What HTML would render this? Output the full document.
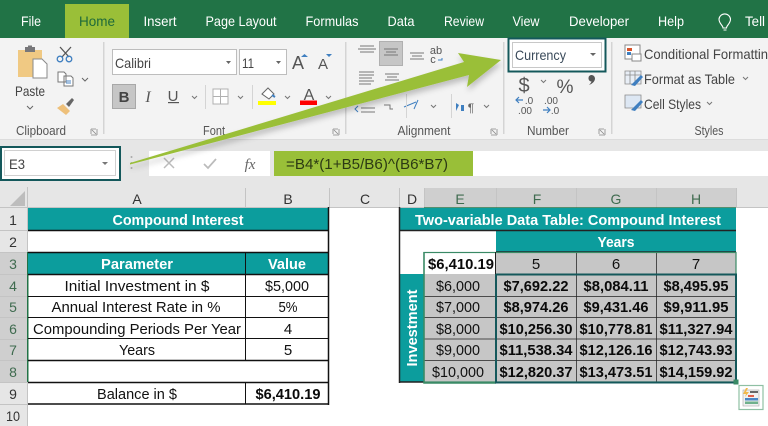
<!DOCTYPE html>
<html><head><meta charset="utf-8"><title>Excel</title>
<style>
html,body{margin:0;padding:0;width:768px;height:426px;overflow:hidden;background:#fff}
svg{display:block;filter:blur(.3px)}
text{font-family:"Liberation Sans",sans-serif}
.t{font-size:14px;fill:#fff;text-anchor:middle}
.c{font-size:15px;fill:#111;text-anchor:middle}
.b{font-size:15px;fill:#0a0a0a;text-anchor:middle;font-weight:bold}
.w{font-size:15px;fill:#fff;text-anchor:middle;font-weight:bold}
.h{font-size:14px;fill:#333;text-anchor:middle}
.g{font-size:14px;fill:#3f6b4f;text-anchor:middle}
</style></head><body>
<svg width="768" height="426" viewBox="0 0 768 426" xmlns="http://www.w3.org/2000/svg">
<defs><filter id="s" x="-5%" y="-20%" width="110%" height="150%"><feDropShadow dx="1" dy="4" stdDeviation="3" flood-color="#000" flood-opacity=".22"/></filter></defs>

<!-- title bar -->
<rect width="768" height="38" fill="#217346"/>
<rect x="65" y="4" width="64" height="34" fill="#9abf38"/>
<text class="t" x="31" y="26" textLength="20" lengthAdjust="spacingAndGlyphs">File</text>
<text x="97" y="26" font-size="14" fill="#1f6a3a" text-anchor="middle" textLength="36" lengthAdjust="spacingAndGlyphs">Home</text>
<text class="t" x="160" y="26" textLength="33" lengthAdjust="spacingAndGlyphs">Insert</text>
<text class="t" x="241" y="26" textLength="71" lengthAdjust="spacingAndGlyphs">Page Layout</text>
<text class="t" x="332" y="26" textLength="53" lengthAdjust="spacingAndGlyphs">Formulas</text>
<text class="t" x="401" y="26" textLength="27" lengthAdjust="spacingAndGlyphs">Data</text>
<text class="t" x="464" y="26" textLength="40" lengthAdjust="spacingAndGlyphs">Review</text>
<text class="t" x="526" y="26" textLength="27" lengthAdjust="spacingAndGlyphs">View</text>
<text class="t" x="599" y="26" textLength="60" lengthAdjust="spacingAndGlyphs">Developer</text>
<text class="t" x="671" y="26" textLength="26" lengthAdjust="spacingAndGlyphs">Help</text>
<text x="745" y="26" font-size="14" fill="#fff" textLength="20" lengthAdjust="spacingAndGlyphs">Tell</text>
<path d="M723 28c0-3-4-4-4-9a5.800 5.800 0 0 1 11.500 0c0 5-4 6-4 9zM723.500 30h3" fill="none" stroke="#fff" stroke-width="1.100"/>

<!-- ribbon -->
<rect y="38" width="768" height="101" fill="#f3f3f3"/>
<rect y="139" width="768" height="48" fill="#e6e6e6"/>
<rect y="139" width="768" height="1" fill="#dcdcdc"/>
<g fill="#d4d4d4">
<rect x="103" y="42" width="1.500" height="92"/><rect x="345" y="42" width="1.500" height="92"/><rect x="503" y="42" width="1.500" height="92"/><rect x="611" y="42" width="1.500" height="92"/>
</g>

<!-- clipboard -->
<path d="M18 50h24v11h-9v16H18z" fill="#f0c983"/>
<rect x="25" y="47" width="10" height="5" fill="#77777a"/><rect x="28" y="45.500" width="4" height="3" fill="#77777a"/>
<path d="M33 59h9l5 5v14H33z" fill="#fff" stroke="#8a8a8a"/>
<text x="30" y="96" font-size="14" fill="#444" text-anchor="middle" textLength="30" lengthAdjust="spacingAndGlyphs">Paste</text>
<path d="M27 106l3 3 3-3M82 78l3 3 3-3" fill="none" stroke="#666"/>
<path d="M60 47l9 10M71 47l-9 10" stroke="#555" stroke-width="1.300" fill="none"/>
<circle cx="60" cy="59" r="2.800" fill="none" stroke="#3f7fc0" stroke-width="1.300"/><circle cx="69" cy="59" r="2.800" fill="none" stroke="#3f7fc0" stroke-width="1.300"/>
<path d="M58 72h6l2 2v8h-8zM64 76h7l2 2v8h-9z" fill="#fff" stroke="#777"/>
<path d="M66 81h5M66 83h5" stroke="#4a86c5"/>
<path d="M57 108l6-4 7 7-4 4z" fill="#eec07a"/><path d="M66 104l6-6 2 2-5 7z" fill="#666"/>
<text x="41" y="135" font-size="13" fill="#555" text-anchor="middle" textLength="50" lengthAdjust="spacingAndGlyphs">Clipboard</text>
<path d="M91 129h5M91 129v5M97 135h-6M97 135v-6M92 130l4 4" fill="none" stroke="#888" stroke-width=".8"/>

<!-- font -->
<rect x="112.500" y="49.500" width="124" height="25" fill="#fff" stroke="#bdbdbd"/>
<rect x="239.500" y="49.500" width="47" height="25" fill="#fff" stroke="#bdbdbd"/>
<text x="115" y="68" font-size="14" fill="#444" textLength="36" lengthAdjust="spacingAndGlyphs">Calibri</text>
<text x="242" y="68" font-size="14" fill="#444" textLength="12" lengthAdjust="spacingAndGlyphs">11</text>
<path d="M226 61h5l-2.500 3zM276 61h5l-2.500 3z" fill="#666"/>
<text x="298" y="69" font-size="18" fill="#555" text-anchor="middle">A</text>
<text x="323" y="69" font-size="15" fill="#555" text-anchor="middle">A</text>
<path d="M301 57h7l-3.500-3z" fill="#3f7fc0"/><path d="M326 54h6l-3 3z" fill="#3f7fc0"/>
<rect x="112.500" y="84.500" width="23" height="24" fill="#c6c6c6" stroke="#a8a8a8"/>
<text x="124" y="102" font-size="15" font-weight="bold" fill="#444" text-anchor="middle">B</text>
<text x="148" y="102" font-size="16" font-style="italic" fill="#555" text-anchor="middle" style="font-family:'Liberation Serif',serif">I</text>
<text x="173" y="101" font-size="15" fill="#555" text-anchor="middle">U</text>
<rect x="168" y="102" width="11" height="1.200" fill="#555"/>
<path d="M192 96l2.500 2.500 2.500-2.500M238 96l2.500 2.500 2.500-2.500M285 96l2.500 2.500 2.500-2.500M326 96l2.500 2.500 2.500-2.500" fill="none" stroke="#777"/>
<rect x="205" y="85" width="1" height="24" fill="#d4d4d4"/><rect x="252" y="85" width="1" height="24" fill="#d4d4d4"/>
<path d="M213 89h15v15h-15zM220.500 89v15M213 96.500h15" fill="#fff" stroke="#b0b0b0"/>
<path d="M262 94l6-6 6 6-5 5z" fill="#fff" stroke="#666"/><path d="M272 95l3 2" stroke="#3f7fc0" stroke-width="2"/>
<rect x="258" y="101" width="18" height="4" fill="#ffff00"/>
<text x="309" y="100" font-size="16" fill="#555" text-anchor="middle">A</text>
<rect x="300" y="100.500" width="17" height="4.500" fill="#f00"/>
<text x="214" y="135" font-size="13" fill="#555" text-anchor="middle" textLength="22" lengthAdjust="spacingAndGlyphs">Font</text>
<path d="M333 129h5M333 129v5M339 135h-6M339 135v-6M334 130l4 4" fill="none" stroke="#888" stroke-width=".8"/>

<!-- alignment -->
<path d="M360 46h14M358 49h18M360 52h14M359 72h15M359 75h15M359 78h13M359 81h15M359 84h12" stroke="#777" fill="none"/>
<rect x="379.500" y="41.500" width="23" height="24" fill="#c6c6c6" stroke="#b0b0b0"/>
<path d="M384 49h14M386 52h10M384 55h14" stroke="#777"/>
<path d="M410 53h14M412 56h10M410 59h14M385 74h14M387 77h10M385 80h14" stroke="#777" fill="none"/>
<text x="436" y="54" font-size="11" fill="#555" text-anchor="middle">ab</text><text x="433" y="63" font-size="11" fill="#555" text-anchor="middle">c</text>
<path d="M442 58v2h-4" stroke="#3f7fc0" fill="none"/>
<path d="M361 108h14M361 112h14" stroke="#777"/>
<path d="M358 106l-3 3 3 3" stroke="#3f7fc0" fill="none"/>
<path d="M384 105h6v4h3" stroke="#777" fill="none"/>
<path d="M404 107l12-5M418 100l-4 9" stroke="#3f7fc0" fill="none"/>
<text x="424" y="135" font-size="13" fill="#555" text-anchor="middle" textLength="53" lengthAdjust="spacingAndGlyphs">Alignment</text>
<path d="M491 129h5M491 129v5M497 135h-6M497 135v-6M492 130l4 4" fill="none" stroke="#888" stroke-width=".8"/>
<path d="M461 105h3v6h-3zM459 105l-3-2v8z" fill="#3f7fc0"/>
<text x="471" y="112" font-size="12" fill="#666" text-anchor="middle">¶</text>
<path d="M431 105l2.500 2.500 2.500-2.500M484 105l2.500 2.500 2.500-2.500" fill="none" stroke="#777"/>
<rect x="451" y="94" width="1" height="24" fill="#d4d4d4"/><rect x="406" y="94" width="1" height="24" fill="#d4d4d4"/>

<!-- number -->
<rect x="508.500" y="38.500" width="97" height="33" fill="#fff" stroke="#14585b" stroke-width="2"/>
<rect x="512.500" y="42.500" width="89" height="25" fill="#fff" stroke="#c8c8c8"/>
<text x="515" y="60" font-size="14" fill="#3a4a5a" textLength="51" lengthAdjust="spacingAndGlyphs">Currency</text>
<path d="M590 53h6l-3 3z" fill="#666"/>
<text x="524" y="92" font-size="20" fill="#555" text-anchor="middle">$</text>
<path d="M541 80l2.500 2.500 2.500-2.500" fill="none" stroke="#777"/>
<text x="565" y="93" font-size="19" fill="#555" text-anchor="middle" textLength="17" lengthAdjust="spacingAndGlyphs">%</text>
<path d="M591 75a3.500 3.500 0 0 1 4 3.500c0 3-3 5.500-6 6.500 1.500-1.500 2.500-3 2.500-3.500a3.300 3.300 0 0 1-.5-6.500z" fill="#555"/>
<text x="529" y="104" font-size="10" fill="#555" text-anchor="middle">.0</text>
<text x="525" y="114" font-size="10" fill="#555" text-anchor="middle">.00</text>
<text x="551" y="104" font-size="10" fill="#555" text-anchor="middle">.00</text>
<text x="555" y="114" font-size="10" fill="#555" text-anchor="middle">.0</text>
<path d="M523 100h-7M519 97l-3 3 3 3M543 110h7M547 107l3 3-3 3" fill="none" stroke="#3f7fc0" stroke-width="1.200"/>
<text x="548" y="135" font-size="13" fill="#555" text-anchor="middle" textLength="42" lengthAdjust="spacingAndGlyphs">Number</text>
<path d="M599 129h5M599 129v5M605 135h-6M605 135v-6M600 130l4 4" fill="none" stroke="#888" stroke-width=".8"/>

<!-- styles -->
<rect x="625" y="45" width="15" height="14" fill="#fff" stroke="#888"/>
<rect x="627" y="48" width="5" height="3" fill="#d9542b"/><rect x="627" y="52" width="4" height="3" fill="#3f7fc0"/>
<rect x="632" y="54" width="9" height="7" fill="#fff" stroke="#888"/>
<text x="644" y="59" font-size="14" fill="#444" textLength="124" lengthAdjust="spacingAndGlyphs">Conditional Formattin</text>
<path d="M625 71h16v13h-16zM625 75h16M630 71v13M635 71v13" fill="#e8eef6" stroke="#8a8a8a" stroke-width=".8"/>
<path d="M631 85l10-10 2 2-8 9z" fill="#3f7fc0"/>
<text x="644" y="84" font-size="14" fill="#444" textLength="91" lengthAdjust="spacingAndGlyphs">Format as Table</text>
<path d="M743 77l2.500 2.500 2.500-2.500M707 102l2.500 2.500 2.500-2.500" fill="none" stroke="#777"/>
<path d="M625 95h16v13h-16z" fill="#dde7f3" stroke="#8a8a8a" stroke-width=".8"/>
<path d="M631 110l10-10 2 2-8 9z" fill="#3f7fc0"/>
<text x="644" y="109" font-size="14" fill="#444" textLength="57" lengthAdjust="spacingAndGlyphs">Cell Styles</text>
<text x="709" y="135" font-size="13" fill="#555" text-anchor="middle" textLength="29" lengthAdjust="spacingAndGlyphs">Styles</text>

<!-- name box -->
<rect x="1" y="147" width="119" height="33" fill="#fff" stroke="#14585b" stroke-width="2"/>
<rect x="4.500" y="150.500" width="111" height="25" fill="#fff" stroke="#d0d0d0"/>
<text x="9" y="169" font-size="14" fill="#444" textLength="16" lengthAdjust="spacingAndGlyphs">E3</text>
<path d="M102 162h6l-3 3z" fill="#777"/>
<circle cx="131.500" cy="157" r="1" fill="#aaa"/><circle cx="131.500" cy="163" r="1" fill="#aaa"/><circle cx="131.500" cy="168" r="1" fill="#aaa"/>

<!-- formula bar -->
<rect x="149" y="151" width="121" height="25" fill="#fff"/>
<rect x="274" y="151" width="494" height="25" fill="#fff"/>
<rect x="274" y="151" width="199" height="25" fill="#99bf38"/>
<path d="M164 158l10 10M174 158l-10 10" stroke="#bbb" stroke-width="1.500"/>
<path d="M204 164l4 4 8-9" stroke="#bbb" stroke-width="1.700" fill="none"/>
<text x="250" y="169" font-size="15" font-style="italic" fill="#666" text-anchor="middle" style="font-family:'Liberation Serif',serif">fx</text>
<text x="286" y="169" font-size="14.500" fill="#2c3a14" textLength="162" lengthAdjust="spacingAndGlyphs">=B4*(1+B5/B6)^(B6*B7)</text>

<!-- column headers -->
<rect y="187" width="768" height="21" fill="#e6e6e6"/>
<rect x="0" y="208" width="28" height="218" fill="#e6e6e6"/>
<rect y="207" width="768" height="1" fill="#c4c4c4"/>
<rect x="27" y="187" width="1" height="239" fill="#c4c4c4"/>
<path d="M25 191v15H10z" fill="#bdbdbd"/>
<rect x="424" y="188" width="312" height="20" fill="#cfcfcf"/>
<rect x="0" y="252" width="28" height="130" fill="#cfcfcf"/>
<g fill="#c4c4c4"><rect x="245" y="188" width="1" height="20"/><rect x="329" y="188" width="1" height="20"/><rect x="399" y="188" width="1" height="20"/><rect x="424" y="188" width="1" height="20"/><rect x="496" y="188" width="1" height="20"/><rect x="576" y="188" width="1" height="20"/><rect x="656" y="188" width="1" height="20"/><rect x="736" y="188" width="1" height="20"/></g>
<g fill="#c4c4c4"><rect y="230" width="28" height="1"/><rect y="252" width="28" height="1"/><rect y="274" width="28" height="1"/><rect y="296" width="28" height="1"/><rect y="317" width="28" height="1"/><rect y="339" width="28" height="1"/><rect y="360" width="28" height="1"/><rect y="382" width="28" height="1"/><rect y="404" width="28" height="1"/></g>
<rect x="27" y="252" width="1.500" height="130" fill="#217346"/>
<rect x="424" y="207" width="312" height="1.500" fill="#217346" opacity=".7"/>
<text class="h" x="137" y="204">A</text><text class="h" x="288" y="204">B</text><text class="h" x="365" y="204">C</text><text class="h" x="412" y="204">D</text>
<text class="g" x="460" y="204">E</text><text class="g" x="537" y="204">F</text><text class="g" x="616" y="204">G</text><text class="g" x="696" y="204">H</text>
<text class="h" x="13" y="225">1</text><text class="h" x="13" y="247">2</text><text class="g" x="13" y="269">3</text><text class="g" x="13" y="291">4</text><text class="g" x="13" y="312">5</text><text class="g" x="13" y="334">6</text><text class="g" x="13" y="355">7</text><text class="g" x="13" y="377">8</text><text class="h" x="13" y="399">9</text><text class="h" x="13" y="421" textLength="14" lengthAdjust="spacingAndGlyphs">10</text>

<!-- left table -->
<rect x="28" y="208" width="301" height="22" fill="#0c9d9d"/>
<rect x="28" y="252" width="301" height="22" fill="#0c9d9d"/>
<g stroke="#111" fill="none">
<path d="M28 230.500h301M28 252.500h301M28 274.500h301" stroke-width="1.500"/>
<path d="M28 296.500h301M28 317.500h301M28 338.500h301"/>
<path d="M28 360.500h301M28 382.500h301M28 404h301" stroke-width="1.500"/>
<path d="M245.500 252v108M245.500 382v22"/>
<path d="M328.500 207v198" stroke-width="1.500"/>
</g>
<text class="w" x="178" y="225" textLength="131" lengthAdjust="spacingAndGlyphs">Compound Interest</text>
<text class="w" x="137" y="269" textLength="72" lengthAdjust="spacingAndGlyphs">Parameter</text>
<text class="w" x="287" y="269" textLength="38" lengthAdjust="spacingAndGlyphs">Value</text>
<text class="c" x="137" y="291" textLength="145" lengthAdjust="spacingAndGlyphs">Initial Investment in $</text>
<text class="c" x="287" y="291" textLength="44" lengthAdjust="spacingAndGlyphs">$5,000</text>
<text class="c" x="136" y="312" textLength="169" lengthAdjust="spacingAndGlyphs">Annual Interest Rate in %</text>
<text class="c" x="288" y="312" textLength="19" lengthAdjust="spacingAndGlyphs">5%</text>
<text class="c" x="137" y="334" textLength="208" lengthAdjust="spacingAndGlyphs">Compounding Periods Per Year</text>
<text class="c" x="288" y="334">4</text>
<text class="c" x="137" y="355" textLength="36" lengthAdjust="spacingAndGlyphs">Years</text>
<text class="c" x="288" y="355">5</text>
<text class="c" x="137" y="399" textLength="80" lengthAdjust="spacingAndGlyphs">Balance in $</text>
<text class="b" x="288" y="399" textLength="65" lengthAdjust="spacingAndGlyphs">$6,410.19</text>

<!-- right table -->
<rect x="399" y="208" width="337" height="22" fill="#0c9d9d"/>
<rect x="496" y="230" width="240" height="22" fill="#0c9d9d"/>
<rect x="399" y="274" width="25" height="108" fill="#0c9d9d"/>
<rect x="424" y="274" width="72" height="108" fill="#c6c6c6"/>
<rect x="496" y="252" width="240" height="130" fill="#c6c6c6"/>
<rect x="424" y="252" width="72" height="22" fill="#fff"/>
<g stroke="#222" fill="none">
<path d="M399 230.500h337M496 252h240" stroke-width="1.500"/>
<path d="M399.500 207v176M399 382h25" stroke-width="1.500"/>
<path d="M424 296.500h312M424 317.500h312M424 339h312M424 360.500h312" stroke-opacity=".75"/>
<path d="M576.500 252v130M656.500 252v130" stroke-opacity=".75"/>
<path d="M496 274.500h240" stroke="#14585b" stroke-width="1.500"/>
</g>
<rect x="424" y="252.500" width="312" height="129.500" fill="none" stroke="#3a8a66" stroke-width="1.200"/>
<path d="M424 252v131h72" fill="none" stroke="#3a8a66" stroke-width="1.500"/>
<rect x="496" y="274.500" width="240" height="108" fill="none" stroke="#14585b" stroke-width="2"/>
<path d="M495.500 252v22" stroke="#222"/>
<rect x="733.500" y="379.500" width="5" height="5" fill="#3a8a66"/>
<text class="w" x="568" y="225" textLength="306" lengthAdjust="spacingAndGlyphs">Two-variable Data Table: Compound Interest</text>
<text class="w" x="616" y="247" textLength="37" lengthAdjust="spacingAndGlyphs">Years</text>
<text class="b" x="461" y="269" textLength="66" lengthAdjust="spacingAndGlyphs">$6,410.19</text>
<text class="c" x="536" y="269">5</text><text class="c" x="616" y="269">6</text><text class="c" x="696" y="269">7</text>
<text class="w" transform="translate(417 328) rotate(-90)" x="0" y="0" textLength="77" lengthAdjust="spacingAndGlyphs">Investment</text>
<text class="c" x="458" y="291" textLength="44" lengthAdjust="spacingAndGlyphs">$6,000</text>
<text class="c" x="458" y="312" textLength="44" lengthAdjust="spacingAndGlyphs">$7,000</text>
<text class="c" x="458" y="334" textLength="44" lengthAdjust="spacingAndGlyphs">$8,000</text>
<text class="c" x="458" y="355" textLength="44" lengthAdjust="spacingAndGlyphs">$9,000</text>
<text class="c" x="458" y="377" textLength="52" lengthAdjust="spacingAndGlyphs">$10,000</text>
<text class="b" x="536" y="291" textLength="65" lengthAdjust="spacingAndGlyphs">$7,692.22</text><text class="b" x="616" y="291" textLength="65" lengthAdjust="spacingAndGlyphs">$8,084.11</text><text class="b" x="696" y="291" textLength="65" lengthAdjust="spacingAndGlyphs">$8,495.95</text>
<text class="b" x="536" y="312" textLength="65" lengthAdjust="spacingAndGlyphs">$8,974.26</text><text class="b" x="616" y="312" textLength="65" lengthAdjust="spacingAndGlyphs">$9,431.46</text><text class="b" x="696" y="312" textLength="65" lengthAdjust="spacingAndGlyphs">$9,911.95</text>
<text class="b" x="536" y="334" textLength="73" lengthAdjust="spacingAndGlyphs">$10,256.30</text><text class="b" x="616" y="334" textLength="73" lengthAdjust="spacingAndGlyphs">$10,778.81</text><text class="b" x="696" y="334" textLength="73" lengthAdjust="spacingAndGlyphs">$11,327.94</text>
<text class="b" x="536" y="355" textLength="73" lengthAdjust="spacingAndGlyphs">$11,538.34</text><text class="b" x="616" y="355" textLength="73" lengthAdjust="spacingAndGlyphs">$12,126.16</text><text class="b" x="696" y="355" textLength="73" lengthAdjust="spacingAndGlyphs">$12,743.93</text>
<text class="b" x="536" y="377" textLength="73" lengthAdjust="spacingAndGlyphs">$12,820.37</text><text class="b" x="616" y="377" textLength="73" lengthAdjust="spacingAndGlyphs">$13,473.51</text><text class="b" x="696" y="377" textLength="73" lengthAdjust="spacingAndGlyphs">$14,159.92</text>

<!-- quick analysis -->
<rect x="739" y="385.500" width="24" height="24" fill="#fff" stroke="#8fc0a4" stroke-width="1.200"/>
<rect x="743" y="390" width="16" height="16" fill="#f0f0f0" stroke="#aaa" stroke-width=".6"/>
<path d="M746 388l-3 6h3l-1 3 4-5h-3l2-4z" fill="#f2b84b"/>
<rect x="750" y="391" width="8" height="2" fill="#666"/><rect x="748" y="395" width="6" height="2" fill="#e0604a"/><rect x="745" y="398" width="13" height="2.500" fill="#4a86c5"/><rect x="745" y="401.500" width="13" height="2.500" fill="#6fb08c"/>

<!-- green arrow -->
<polygon points="130,163 464,62 458,53 501,60 467,87 469,75 130,164.500" fill="#9abf38" filter="url(#s)"/>
</svg>
</body></html>
